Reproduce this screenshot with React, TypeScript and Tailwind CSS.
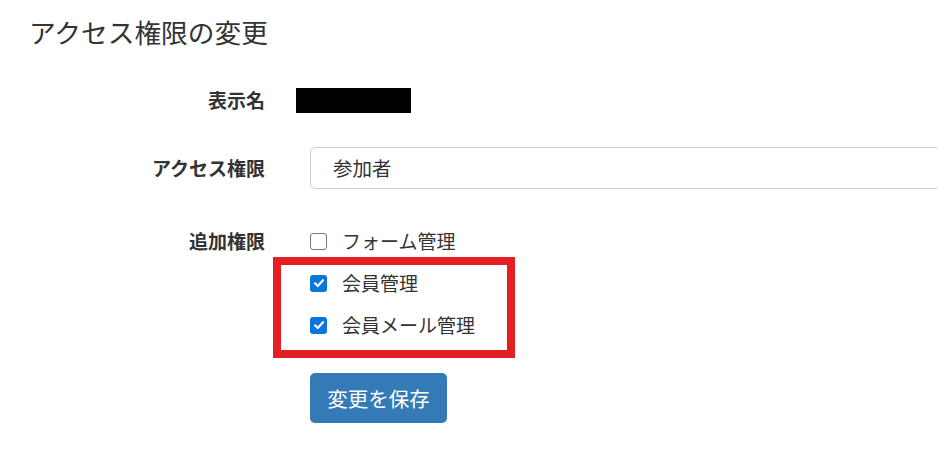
import React, { useState } from "react";

const font = { fontFamily: '"Noto Sans CJK JP", "Noto Sans", sans-serif' };

const Check: React.FC<{ checked: boolean; onClick: () => void }> = ({ checked, onClick }) =>
  checked ? (
    <span
      onClick={onClick}
      className="flex h-[17px] w-[17px] items-center justify-center rounded-[3px] bg-[#0b75dc]"
    >
      <svg width="12" height="12" viewBox="0 0 12 12" fill="none">
        <path d="M2 6.3 L4.8 9 L10 3.2" stroke="white" strokeWidth="2.2" strokeLinecap="round" strokeLinejoin="round" />
      </svg>
    </span>
  ) : (
    <span
      onClick={onClick}
      className="block h-[17px] w-[17px] rounded-[3px] border-[1.5px] border-[#767676] bg-white"
    />
  );

export default function App() {
  const [perms, setPerms] = useState({ form: false, member: true, mail: true });
  const toggle = (k: keyof typeof perms) => setPerms({ ...perms, [k]: !perms[k] });

  return (
    <div className="h-[456px] w-[937px] overflow-hidden bg-white text-[#333]" style={font}>
      <h1 className="ml-[29px] mt-[16px] text-[26.7px] leading-[31px] font-normal">アクセス権限の変更</h1>

      <div className="mt-[41px] flex h-[25px] items-center">
        <div className="w-[265px] shrink-0 text-right text-[19px] font-bold">表示名</div>
        <div className="ml-[31px] h-[25px] w-[115px] shrink-0 bg-black" />
      </div>

      <div className="mt-[34px] flex items-center">
        <div className="w-[265px] shrink-0 text-right text-[19px] font-bold">アクセス権限</div>
        <div className="ml-[45px] flex h-[42px] w-[700px] shrink-0 items-center rounded-[5px] border border-[#ccc] pl-[22px] text-[19.5px]">
          参加者
        </div>
      </div>

      <div className="mt-[31px] flex">
        <div className="flex h-[42px] w-[265px] shrink-0 items-center justify-end text-[19px] font-bold">追加権限</div>
        <div className="ml-[45px] flex flex-col">
          <label className="flex h-[42px] items-center gap-[15px] text-[19px]">
            <Check checked={perms.form} onClick={() => toggle("form")} />
            フォーム管理
          </label>
          <div className="relative">
            <div className="pointer-events-none absolute left-[-37px] top-[-5px] h-[101px] w-[242px] border-[8px] border-[#e41e22]" />
            <label className="flex h-[42px] items-center gap-[15px] text-[19px]">
              <Check checked={perms.member} onClick={() => toggle("member")} />
              会員管理
            </label>
            <label className="flex h-[42px] items-center gap-[15px] text-[19px]">
              <Check checked={perms.mail} onClick={() => toggle("mail")} />
              会員メール管理
            </label>
          </div>
          <button className="mt-[27px] h-[50px] w-[137px] rounded-[5px] bg-[#337ab7] text-[20.5px] text-white">
            変更を保存
          </button>
        </div>
      </div>
    </div>
  );
}
